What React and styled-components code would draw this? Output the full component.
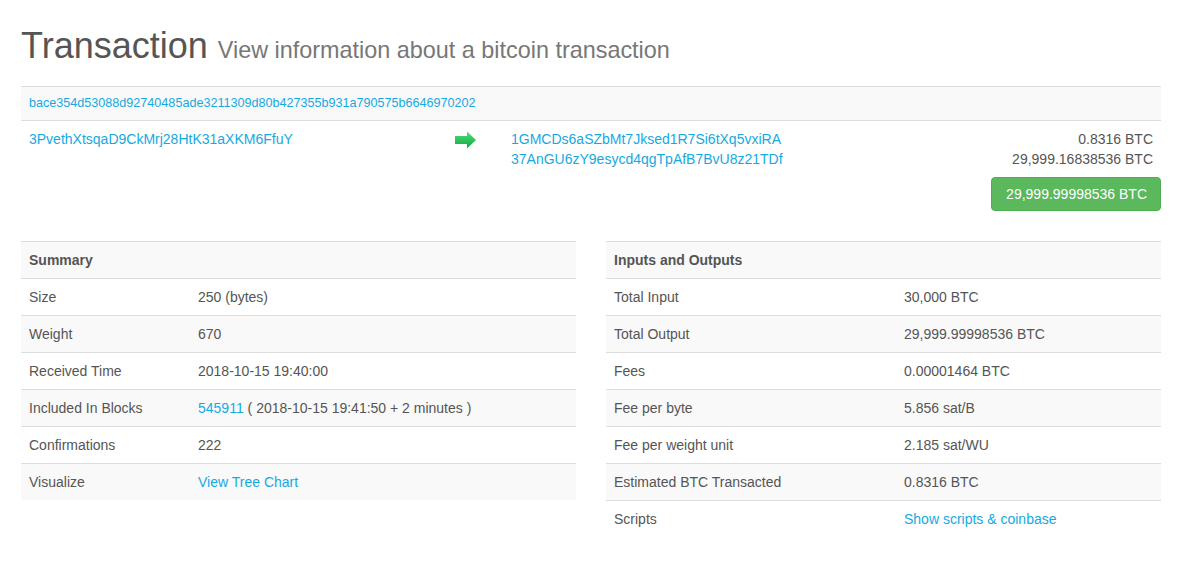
import styled, { createGlobalStyle } from 'styled-components';

const Global = createGlobalStyle`
  body {
    margin: 0;
    background: #fff;
    font-family: "Liberation Sans", Arial, sans-serif;
    font-size: 14px;
    line-height: 20px;
    color: #555;
  }
  * { box-sizing: border-box; }
`;

function Arrow(){
    return(
        <svg width="22" height="18" viewBox="0 0 22 18">
            <defs>
                <linearGradient id="g" x1="0" y1="0" x2="0" y2="1">
                    <stop offset="0" stopColor="#4fe07a" />
                    <stop offset="1" stopColor="#11a640" />
                </linearGradient>
            </defs>
            <path d="M0 5 H12 V0.5 L21 9 L12 17.5 V13 H0 Z" fill="url(#g)" />
        </svg>
    )
}

function InfoTable({title, rows, labelWidth}){
    return(
        <Table>
            <Row $head>
                <Cell $bold>{title}</Cell>
            </Row>
            {rows.map(([label, value], i) => (
                <Row key={label} $odd={i % 2 === 1}>
                    <Cell style={{width: labelWidth}}>{label}</Cell>
                    <Cell>{value}</Cell>
                </Row>
            ))}
        </Table>
    )
}

export default function App(){
    const summary = [
        ['Size', '250 (bytes)'],
        ['Weight', '670'],
        ['Received Time', '2018-10-15 19:40:00'],
        ['Included In Blocks', <><Link>545911</Link> ( 2018-10-15 19:41:50 + 2 minutes )</>],
        ['Confirmations', '222'],
        ['Visualize', <Link>View Tree Chart</Link>],
    ]

    const io = [
        ['Total Input', '30,000 BTC'],
        ['Total Output', '29,999.99998536 BTC'],
        ['Fees', '0.00001464 BTC'],
        ['Fee per byte', '5.856 sat/B'],
        ['Fee per weight unit', '2.185 sat/WU'],
        ['Estimated BTC Transacted', '0.8316 BTC'],
        ['Scripts', <Link>Show scripts &amp; coinbase</Link>],
    ]

    return(
        <Page>
            <Global />
            <Title>Transaction <small>View information about a bitcoin transaction</small></Title>

            <TxBox>
                <HashRow><Link>bace354d53088d92740485ade3211309d80b427355b931a790575b6646970202</Link></HashRow>
                <IoRow>
                    <Inputs><Link>3PvethXtsqaD9CkMrj28HtK31aXKM6FfuY</Link></Inputs>
                    <ArrowCell><Arrow /></ArrowCell>
                    <Outputs>
                        <OutLine><Link>1GMCDs6aSZbMt7Jksed1R7Si6tXq5vxiRA</Link><span>0.8316 BTC</span></OutLine>
                        <OutLine><Link>37AnGU6zY9esycd4qgTpAfB7BvU8z21TDf</Link><span>29,999.16838536 BTC</span></OutLine>
                        <Total>29,999.99998536 BTC</Total>
                    </Outputs>
                </IoRow>
            </TxBox>

            <Columns>
                <InfoTable title="Summary" rows={summary} labelWidth="169px" />
                <InfoTable title="Inputs and Outputs" rows={io} labelWidth="290px" />
            </Columns>
        </Page>
    )
}

const Page = styled.div`
    padding: 0 35px 0 21px;
`;

const Title = styled.h1`
    margin: 0;
    padding-top: 26px;
    height: 86px;
    font-size: 36px;
    line-height: 40px;
    font-weight: 400;
    color: #555;

    small{
        font-size: 23.4px;
        color: #777;
    }
`;

const Link = styled.a`
    color: #16a9e1;
    text-decoration: none;
    cursor: pointer;
`;

const TxBox = styled.div`
    width: 1140px;
`;

const HashRow = styled.div`
    border-top: 1px solid #ddd;
    background: #f9f9f9;
    padding: 8px;
    font-size: 12.6px;
    line-height: 17px;
`;

const IoRow = styled.div`
    display: flex;
    border-top: 1px solid #ddd;
    padding: 8px 8px 10px 8px;
`;

const Inputs = styled.div`
    width: 426px;
`;

const ArrowCell = styled.div`
    width: 56px;
    padding-top: 2px;
`;

const Outputs = styled.div`
    flex: 1;
    display: flex;
    flex-direction: column;
    align-items: flex-end;
`;

const OutLine = styled.div`
    width: 100%;
    display: flex;
    justify-content: space-between;
`;

const Total = styled.button`
    margin-top: 8px;
    margin-right: -8px;
    padding: 6px 13px 6px 14px;
    font-family: "Liberation Sans", Arial, sans-serif;
    font-size: 14px;
    line-height: 20px;
    color: #fff;
    background: #5cb85c;
    border: 1px solid #4cae4c;
    border-radius: 4px;
`;

const Columns = styled.div`
    display: flex;
    gap: 30px;
    margin-top: 20px;
    width: 1140px;
`;

const Table = styled.div`
    width: 555px;
`;

const Row = styled.div`
    display: flex;
    border-top: 1px solid #ddd;
    background: ${props => (props.$head || props.$odd) ? "#f9f9f9" : "#fff"};
`;

const Cell = styled.div`
    padding: 8px;
    line-height: 20px;
    font-weight: ${props => props.$bold ? 700 : 400};
`;
